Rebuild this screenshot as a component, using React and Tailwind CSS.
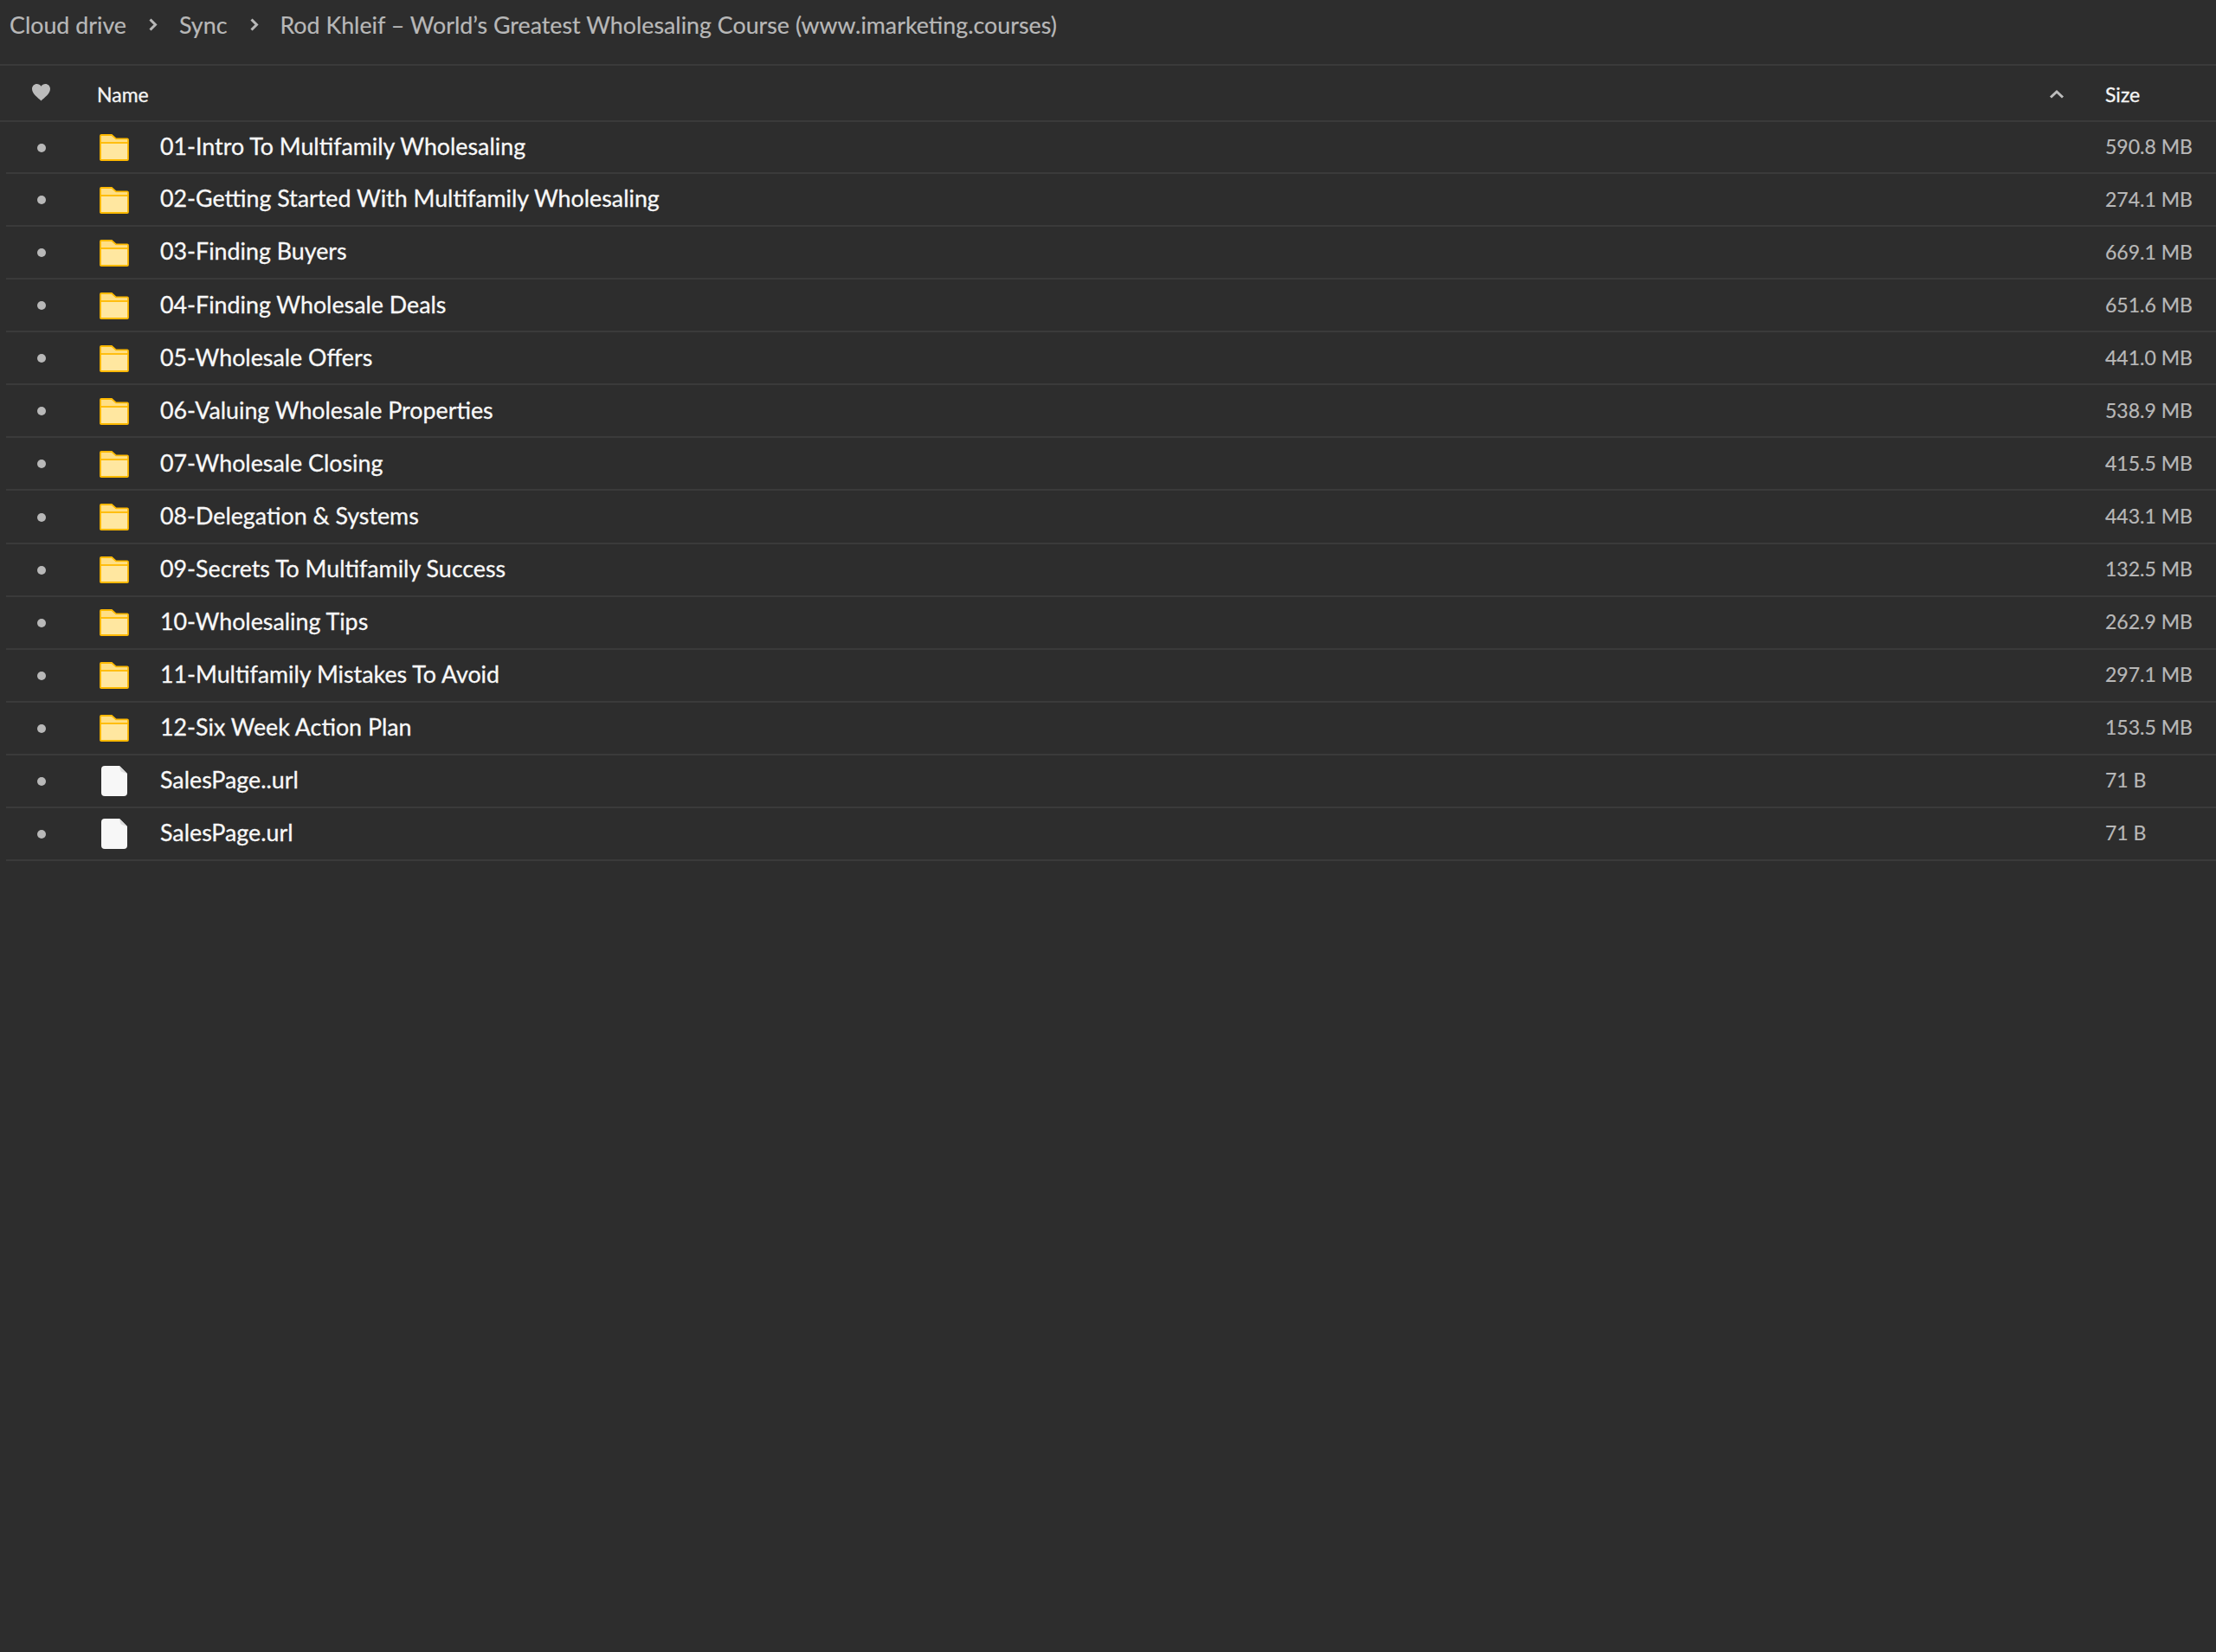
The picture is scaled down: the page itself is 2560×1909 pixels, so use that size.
const rows = [
  ["01-Intro To Multifamily Wholesaling", "590.8 MB"],
  ["02-Getting Started With Multifamily Wholesaling", "274.1 MB"],
  ["03-Finding Buyers", "669.1 MB"],
  ["04-Finding Wholesale Deals", "651.6 MB"],
  ["05-Wholesale Offers", "441.0 MB"],
  ["06-Valuing Wholesale Properties", "538.9 MB"],
  ["07-Wholesale Closing", "415.5 MB"],
  ["08-Delegation & Systems", "443.1 MB"],
  ["09-Secrets To Multifamily Success", "132.5 MB"],
  ["10-Wholesaling Tips", "262.9 MB"],
  ["11-Multifamily Mistakes To Avoid", "297.1 MB"],
  ["12-Six Week Action Plan", "153.5 MB"],
  ["SalesPage..url", "71 B", true],
  ["SalesPage.url", "71 B", true],
];

function FolderIcon() {
  return (
    <svg width="34" height="31" viewBox="0 0 34 31" className="block">
      <path d="M1 29.5 V2 Q1 1 2 1 H14 L19 5.5 H32 Q33 5.5 33 6.5 V29 Q33 30 32 30 H2 Q1 30 1 29.5 Z" fill="#ffe7a0" stroke="#ffb900" strokeWidth="1.8" />
      <path d="M2 2 H13.6 L18.6 6.5 H32 V9 H2 Z" fill="#ffdf85" />
      <path d="M1 10 H33" stroke="#ffb900" strokeWidth="1.8" />
    </svg>
  );
}

function FileIcon() {
  return (
    <svg width="30" height="35" viewBox="0 0 30 35" className="block">
      <path d="M4 0 H21 L30 9 V31 Q30 35 26 35 H4 Q0 35 0 31 V4 Q0 0 4 0 Z" fill="#f7f7f7" />
      <path d="M21 0 L30 9 L24 7 Q22.5 6.5 22 5 Z" fill="#dcdcdc" />
    </svg>
  );
}

function Chevron() {
  return (
    <svg width="10" height="15" viewBox="0 0 10 15" fill="none" className="block">
      <path d="M1.5 1.5 L7.5 7.5 L1.5 13.5" stroke="#b8b8b8" strokeWidth="3" />
    </svg>
  );
}

function Row({ name, size, file, first }) {
  return (
    <div className={`ml-[7px] flex items-center border-b-2 border-[#3a3a3a] box-border ${first ? "h-[60px]" : "h-[61.08px]"}`}>
      <div className="flex w-[81px] justify-center pt-[1px]">
        <span className="block h-[10px] w-[10px] rounded-full bg-[#b8b8b8]" />
      </div>
      <div className="ml-[26px] flex w-[36px] justify-center pt-[1px]">{file ? <FileIcon /> : <FolderIcon />}</div>
      <div className="ml-[35px] flex-1 text-[26.8px] leading-none -mt-[1.5px] text-[#f8f8f8] [-webkit-text-stroke:0.3px]">{name}</div>
      <div className="w-[128px] text-[23px] -mt-[1px] leading-none text-[#b8b8b8] [-webkit-text-stroke:0.2px]">{size}</div>
    </div>
  );
}

export default function App() {
  return (
    <div className="min-h-[1909px] bg-[#2d2d2d] font-['Lato',sans-serif]">
      <div className="flex h-[76px] items-start border-b-2 border-[#3a3a3a] box-border pl-[11px] pt-[13px] text-[26.8px] leading-[32px] text-[#b8b8b8] [-webkit-text-stroke:0.2px]">
        <span>Cloud drive</span>
        <span className="ml-[26px] mr-[25px] mt-[8px]"><Chevron /></span>
        <span>Sync</span>
        <span className="ml-[27px] mr-[24px] mt-[8px]"><Chevron /></span>
        <span>Rod Khleif – World’s Greatest Wholesaling Course (www.imarketing.courses)</span>
      </div>
      <div className="flex h-[65px] items-center border-b-2 border-[#3a3a3a] box-border">
        <div className="flex w-[94px] justify-center -mt-[1px]">
          <svg width="21" height="20" viewBox="0 0 21 20" className="block">
            <path d="M10.5 19.5 C7 16 0 11.5 0 5.8 C0 2.4 2.6 0 5.6 0 C7.6 0 9.4 1 10.5 2.8 C11.6 1 13.4 0 15.4 0 C18.4 0 21 2.4 21 5.8 C21 11.5 14 16 10.5 19.5 Z" fill="#bcbcbc" />
          </svg>
        </div>
        <div className="ml-[18px] flex-1 text-[23px] leading-none mt-[4px] text-[#f4f4f4] [-webkit-text-stroke:0.3px]">Name</div>
        <svg width="18" height="12" viewBox="0 0 18 12" fill="none" className="block mr-[47px] mt-[2px]">
          <path d="M2 9.5 L9 3 L16 9.5" stroke="#bcbcbc" strokeWidth="3" />
        </svg>
        <div className="w-[128px] text-[23px] leading-none mt-[3px] text-[#f4f4f4] [-webkit-text-stroke:0.3px]">Size</div>
      </div>
      {rows.map(([name, size, file], i) => (
        <Row key={name} name={name} size={size} file={file} first={i === 0} />
      ))}
    </div>
  );
}
